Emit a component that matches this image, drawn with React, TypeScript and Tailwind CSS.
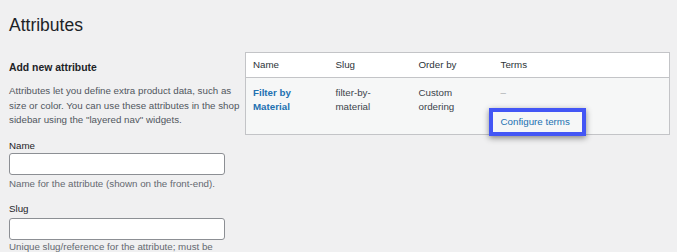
import React from 'react';

const columns = [
  { label: 'Name', w: 'w-[83px]' },
  { label: 'Slug', w: 'w-[83px]' },
  { label: 'Order by', w: 'w-[82px]' },
  { label: 'Terms', w: '' },
];

function Field({ label, help, labelMt, inputMt, helpMt }: {
  label: string; help: string; labelMt: string; inputMt: string; helpMt: string;
}) {
  return (
    <div>
      <label className={`block text-[#1d2327] ${labelMt}`}>{label}</label>
      <input
        type="text"
        className={`block w-[216px] h-[22px] bg-white border border-[#8c8f94] rounded-[3px] ${inputMt}`}
      />
      <p className={`w-[214px] text-[#646970] ${helpMt}`}>{help}</p>
    </div>
  );
}

export default function App() {
  return (
    <div className="w-full h-[252px] overflow-hidden bg-[#f0f0f1] text-[#3c434a] text-[9.75px] leading-[14.6px] font-['Liberation_Sans',Arial,sans-serif]">
      <h1 className="pt-[13px] pl-[9px] text-[17.5px] leading-[24px] text-[#1d2327]">Attributes</h1>

      <div className="flex mt-[15px] pl-[9px]">
        {/* left: add form */}
        <div className="w-[236px] shrink-0">
          <h2 className="mt-[9px] text-[10.4px] leading-[14px] font-bold text-[#1d2327]">Add new attribute</h2>
          <p className="mt-[9px] text-[#50575e]">
            Attributes let you define extra product data, such as size or color. You can use these attributes in the shop sidebar using the "layered nav" widgets.
          </p>
          <Field
            label="Name"
            help="Name for the attribute (shown on the front-end)."
            labelMt="mt-[11px]"
            inputMt="mt-0"
            helpMt="mt-[2px]"
          />
          <Field
            label="Slug"
            help="Unique slug/reference for the attribute; must be no more than 28 characters."
            labelMt="mt-[10px]"
            inputMt="mt-[1px]"
            helpMt="mt-0"
          />
        </div>

        {/* right: attributes table */}
        <div className="w-[425px] shrink-0">
          <table className="w-full border border-[#c3c4c7] border-collapse table-fixed">
            <thead className="bg-white">
              <tr className="border-b border-[#c3c4c7]">
                {columns.map((c) => (
                  <th key={c.label} className={`${c.w} h-[25px] pl-[7px] pr-[8px] pt-[1px] text-left font-normal text-[#2c3338] align-middle`}>
                    {c.label}
                  </th>
                ))}
              </tr>
            </thead>
            <tbody className="bg-[#f6f7f7]">
              <tr className="h-[57px] align-top">
                <td className="pl-[7px] pr-[8px] pt-[8px] leading-[14px]">
                  <a className="font-bold text-[#2271b1]">Filter by Material</a>
                </td>
                <td className="pl-[7px] pr-[8px] pt-[8px] leading-[14px]">filter-by-material</td>
                <td className="pl-[7px] pr-[8px] pt-[8px] leading-[14px]">Custom ordering</td>
                <td className="pl-[7px] pr-[8px] pt-[8px] leading-[14px]">
                  <div className="text-[#a7aaad]">–</div>
                  <div className="mt-[15px]">
                    <span className="relative inline-block">
                      <a className="text-[#2271b1]">Configure terms</a>
                      <span className="absolute -left-[12px] -right-[16px] -top-[7px] -bottom-[7px] border-[4px] border-[#4356f5] shadow-[0_2px_6px_rgba(0,0,0,0.45)] pointer-events-none" />
                    </span>
                  </div>
                </td>
              </tr>
            </tbody>
          </table>
        </div>
      </div>
    </div>
  );
}
